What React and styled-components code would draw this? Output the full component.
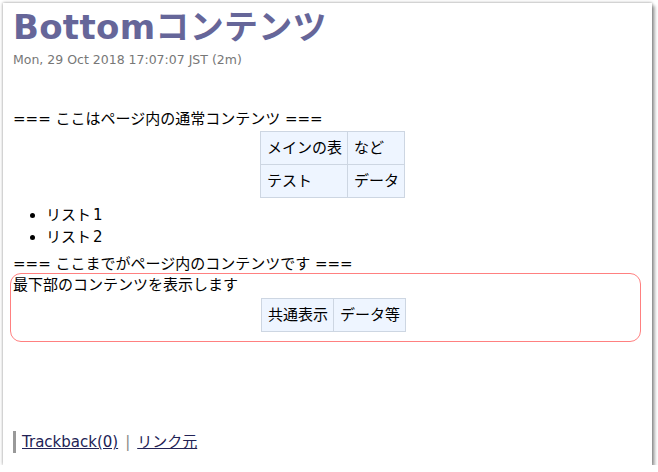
import styled, { createGlobalStyle } from "styled-components";

const GlobalStyle = createGlobalStyle`
  html, body {
    margin: 0;
    padding: 0;
    background: #ffffff;
  }
  body {
    font-family: "DejaVu Sans", "Noto Sans CJK JP", sans-serif;
    font-size: 15px;
    line-height: 22px;
    color: #000;
  }
`;

const Frame = styled.div`
  box-sizing: border-box;
  margin: 3px 0 0 3px;
  width: 649px;
  height: 462px;
  background: #fff;
  box-shadow: 0 0 3px rgba(0, 0, 0, 0.45), 3px 3px 3px rgba(0, 0, 0, 0.3);
  padding: 0 0 0 10px;
  display: flex;
  flex-direction: column;
`;

const Title = styled.h1`
  margin: 3px 0 0;
  font-size: 34px;
  line-height: 42px;
  font-weight: bold;
  color: #666699;
  letter-spacing: 0.3px;
`;

const Stamp = styled.div`
  margin-top: 4px;
  font-size: 12.5px;
  line-height: 16px;
  color: #777;
`;

const Body = styled.div`
  margin-top: 40px;
`;

const Line = styled.div``;

const TableWrap = styled.div`
  display: flex;
  justify-content: center;
  margin-right: ${(p) => (p.$shift ? "-14px" : "0")};
  margin-top: ${(p) => p.$top || 0}px;
`;

const Table = styled.table`
  border-collapse: collapse;
  td {
    background: #eef5ff;
    border: 1px solid #cdd6e2;
    padding: 5px 5px 5px 6px;
    line-height: 22px;
  }
`;

const List = styled.ul`
  margin: 6px 0 5px;
  padding-left: 33px;
  li {
    line-height: 22px;
  }
`;

const Digit = styled.span`
  margin-left: 2px;
`;

const BottomBox = styled.div`
  margin: -2px 11px 0 -3px;
  padding: 0 0 9px 2px;
  border: 1px solid #ff8080;
  border-radius: 11px;
`;

const Footer = styled.div`
  margin-top: auto;
  margin-bottom: 12px;
  border-left: 3px solid #999;
  padding-left: 6px;
  line-height: 22px;
  a {
    color: #222255;
    text-decoration: underline;
  }
`;

const Sep = styled.span`
  color: #888;
  margin: 0 7px;
`;

export default function App() {
  return (
    <>
      <GlobalStyle />
      <Frame>
        <Title>Bottomコンテンツ</Title>
        <Stamp>Mon, 29 Oct 2018 17:07:07 JST (2m)</Stamp>
        <Body>
          <Line>=== ここはページ内の通常コンテンツ ===</Line>
          <TableWrap $top={1}>
            <Table>
              <tbody>
                <tr>
                  <td>メインの表</td>
                  <td>など</td>
                </tr>
                <tr>
                  <td>テスト</td>
                  <td>データ</td>
                </tr>
              </tbody>
            </Table>
          </TableWrap>
          <List>
            <li>
              リスト<Digit>1</Digit>
            </li>
            <li>
              リスト<Digit>2</Digit>
            </li>
          </List>
          <Line>=== ここまでがページ内のコンテンツです ===</Line>
          <BottomBox>
            <Line>最下部のコンテンツを表示します</Line>
            <TableWrap $shift $top={2}>
              <Table>
                <tbody>
                  <tr>
                    <td>共通表示</td>
                    <td>データ等</td>
                  </tr>
                </tbody>
              </Table>
            </TableWrap>
          </BottomBox>
        </Body>
        <Footer>
          <a href="#tb">Trackback(0)</a>
          <Sep>|</Sep>
          <a href="#ref">リンク元</a>
        </Footer>
      </Frame>
    </>
  );
}
